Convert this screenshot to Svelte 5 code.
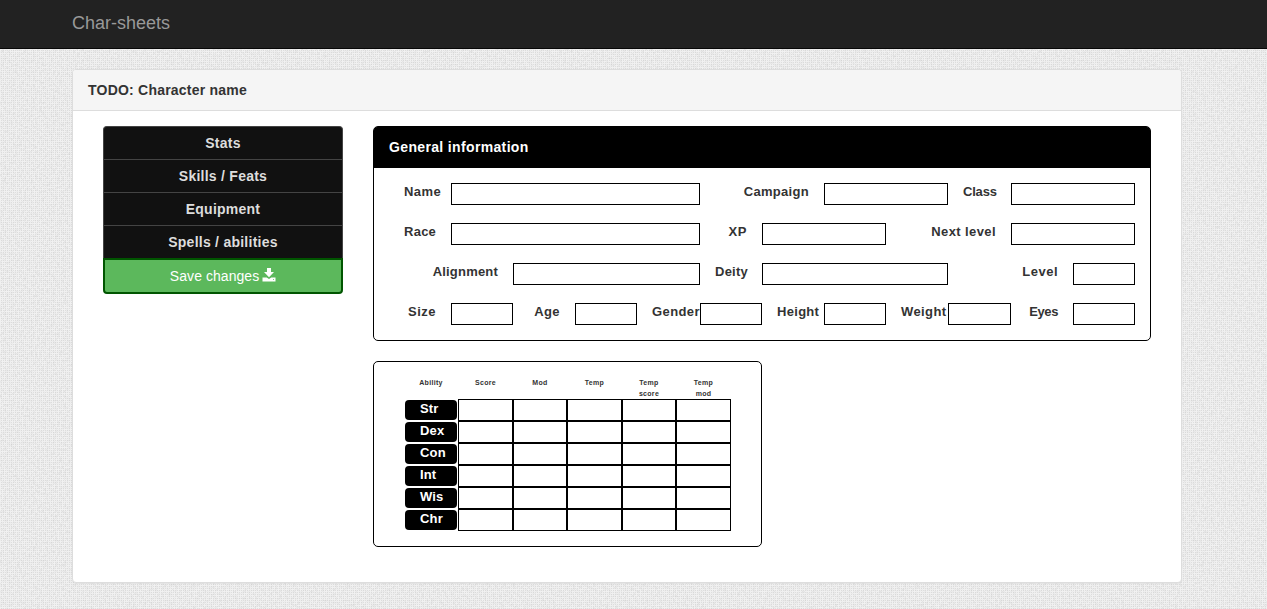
<script>
  const fields = [
    [['Name', 1, 4, 0.4], ['Campaign', 2, 2, 0.3], ['Class', 1, 2, -0.2]],
    [['Race', 1, 4, 0.2], ['XP', 1, 2, 0.6], ['Next level', 2, 2, 0.4]],
    [['Alignment', 2, 3, 0.2], ['Deity', 1, 3, 0.25], ['Level', 2, 1, 0.5]],
    [['Size', 1, 1, 0.5], ['Age', 1, 1, 0.4], ['Gender', 1, 1, 0.4], ['Height', 1, 1, 0.3], ['Weight', 1, 1, 0.4], ['Eyes', 1, 1, -0.4]]
  ];
  const nav = ['Stats', 'Skills / Feats', 'Equipment', 'Spells / abilities'];
  const heads = ['Ability', 'Score', 'Mod', 'Temp', 'Temp score', 'Temp mod'];
  const abilities = ['Str', 'Dex', 'Con', 'Int', 'Wis', 'Chr'];
</script>

<div class="page">
  <svg class="grain" aria-hidden="true">
    <filter id="noise" x="0" y="0" width="100%" height="100%">
      <feTurbulence type="fractalNoise" baseFrequency="0.45" numOctaves="2" seed="4" />
      <feColorMatrix values="0 0 0 0 0.5  0 0 0 0 0.5  0 0 0 0 0.5  0.7 0 0 0 -0.29" />
    </filter>
    <rect width="100%" height="100%" filter="url(#noise)" />
  </svg>
  <header><div class="brand">Char-sheets</div></header>
  <main>
    <div class="title">TODO: Character name</div>
    <div class="content">
      <nav>
        {#each nav as item}<a>{item}</a>{/each}
        <button>Save changes <svg width="14" height="14" viewBox="0 0 14 14" fill="#fff"><path d="M5 0h4v4h3L7 9.3 2 4h3z" /><path d="M.5 9.5h4.2L7 11l2.3-1.5h4.2v4H.5zM11 11.3v.8h1v-.8z" fill-rule="evenodd" /></svg></button>
      </nav>
      <div class="sheets">
        <section class="general">
          <h2>General information</h2>
          <div class="form">
            {#each fields as row}
              <div class="row">
                {#each row as [label, span, width, tracking]}
                  <label style="grid-column: span {span}; letter-spacing: {tracking}px">{label}</label>
                  <input style="grid-column: span {width}" aria-label={label} />
                {/each}
              </div>
            {/each}
          </div>
        </section>
        <section class="abilities">
          <div class="heads">
            {#each heads as head}<span>{head}</span>{/each}
          </div>
          {#each abilities as ability}
            <div class="score">
              <b>{ability}</b>
              {#each [1, 2, 3, 4, 5] as n}<input aria-label="{ability} {n}" />{/each}
            </div>
          {/each}
        </section>
      </div>
    </div>
  </main>
</div>

<style>
  :global(body) { margin: 0; }
  * { box-sizing: border-box; }
  .page {
    position: relative;
    height: 609px;
    overflow: hidden;
    background: conic-gradient(#dedede 25%, #f1f1f1 0) 0 0 / 2px 2px;
    font: 14px/20px "Liberation Sans", Arial, sans-serif;
    color: #333;
  }
  .grain { position: absolute; inset: 0; width: 100%; height: 100%; }
  header { position: relative; height: 49px; padding-left: 72px; background: #222; border-bottom: 1px solid #080808; }
  .brand { color: #999; font-size: 18px; line-height: 46px; }
  main {
    position: relative;
    width: 1110px;
    height: 514px;
    margin: 20px 0 0 72px;
    background: #fff;
    border: 1px solid #ddd;
    border-radius: 4px;
    box-shadow: 0 1px 1px rgba(0, 0, 0, 0.05);
  }
  .title { height: 41px; padding-left: 15px; line-height: 40px; font-weight: bold; letter-spacing: 0.22px; background: #f5f5f5; border-bottom: 1px solid #ddd; border-radius: 3px 3px 0 0; }
  .content { display: flex; gap: 30px; padding: 15px 30px; }
  nav { width: 240px; }
  nav a { display: block; height: 33px; line-height: 33px; border: 1px solid #444; border-bottom: 0; background: #111; color: #ddd; font-weight: bold; text-align: center; letter-spacing: 0.25px; }
  nav a:first-child { border-radius: 4px 4px 0 0; }
  button { display: block; width: 240px; height: 36px; padding: 0; border: 2px solid #050; border-radius: 0 0 4px 4px; background: #5cb85c; color: #fff; font: inherit; letter-spacing: 0.05px; }
  button svg { vertical-align: -1px; margin-left: -1px; }
  .sheets { width: 778px; }
  section { border: 1px solid #000; border-radius: 5px; background: #fff; }
  .general { height: 215px; }
  h2 { margin: 0; height: 41px; padding-left: 15px; line-height: 40px; font-size: 14px; background: #000; color: #fff; border-radius: 3px 3px 0 0; letter-spacing: 0.35px; }
  .form { padding: 15px; display: grid; gap: 18px; }
  .row { display: grid; grid-template-columns: repeat(4, 62px) 63px repeat(4, 62px) 63px repeat(2, 62px); height: 22px; }
  label { padding: 0 15px; font-size: 13px; font-weight: bold; line-height: 17px; text-align: right; white-space: nowrap; }
  input { display: block; width: 100%; min-width: 0; height: 22px; margin: 0; padding: 0 3px; border: 1px solid #000; border-radius: 0; background: #fff; outline: 0; }
  .abilities { width: 389px; height: 186px; margin-top: 20px; padding: 15px 30px; }
  .heads, .score { display: grid; grid-template-columns: repeat(3, 54px 55px); }
  .heads { height: 22px; font-size: 7px; line-height: 11px; font-weight: bold; text-align: center; letter-spacing: 0.3px; }
  .heads span { padding: 0 12px; }
  .score b { height: 20px; margin: 1px; padding-left: 15px; border-radius: 4px; background: #000; color: #fff; font-size: 13px; line-height: 17px; letter-spacing: 0.15px; }
</style>
